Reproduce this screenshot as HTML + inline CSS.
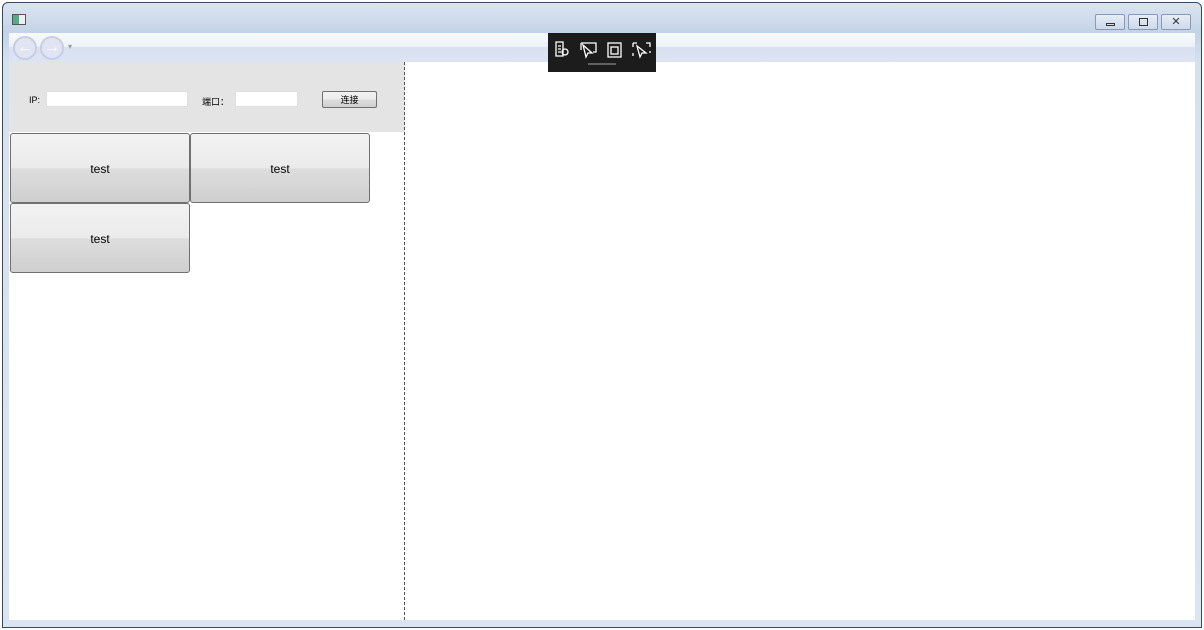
<!DOCTYPE html>
<html><head><meta charset="utf-8"><style>
*{margin:0;padding:0;box-sizing:border-box}
body{width:1204px;height:630px;position:relative;overflow:hidden;background:#fff;font-family:"Liberation Sans","Noto Sans CJK SC",sans-serif}
.a{position:absolute}
.btn{position:absolute;border:1px solid #707070;border-radius:3px;background:linear-gradient(#f2f2f2 0,#ebebeb 50%,#dddddd 51%,#cfcfcf 100%);font-size:12px;display:flex;align-items:center;justify-content:center;color:#000;padding-top:2px}
.wb{position:absolute;top:14px;width:30px;height:16px;border:1px solid #8a9ab5;border-radius:2px;background:linear-gradient(#e6edf6,#cdd9ea)}
</style></head><body>
<div class="a" style="left:2px;top:2px;width:1200px;height:626px;border:1px solid #3a4a5e;border-radius:6px 6px 0 0;background:linear-gradient(#dbe5f1,#c3d3e6 30px,#d6e1ee 60px,#dbe5f1)"></div>
<div class="a" style="left:12px;top:14px;width:14px;height:11px;border:1px solid #555;background:linear-gradient(90deg,#5a8 0 50%,#eee 50%)"></div>
<div class="wb" style="left:1095px"><div class="a" style="left:10px;top:8px;width:9px;height:3px;border:1px solid #333"></div></div>
<div class="wb" style="left:1128px"><div class="a" style="left:10px;top:3px;width:9px;height:8px;border:1px solid #333"></div></div>
<div class="wb" style="left:1161px;font-size:11px;text-align:center;line-height:14px;color:#333">✕</div>
<div class="a" style="left:9px;top:33px;width:1186px;height:29px;background:linear-gradient(#f8fafd 0,#eef2f9 45%,#d9e2f1 50%,#dce4f3 100%)"></div>
<div class="a" style="left:13px;top:36px;width:24px;height:24px;border-radius:50%;border:2px solid #c9cde2;background:#e1e5f3;color:#fff;font-size:16px;text-align:center;line-height:20px">←</div>
<div class="a" style="left:40px;top:36px;width:24px;height:24px;border-radius:50%;border:2px solid #c9cde2;background:#e1e5f3;color:#fff;font-size:16px;text-align:center;line-height:20px">→</div>
<div class="a" style="left:68px;top:42px;font-size:8px;color:#999">▾</div>
<div class="a" style="left:9px;top:62px;width:1186px;height:558px;background:#fff"></div>
<div class="a" style="left:9px;top:62px;width:396px;height:70px;background:#e4e4e4"></div>
<div class="a" style="left:29px;top:95px;font-size:9px">IP:</div>
<div class="a" style="left:46px;top:91px;width:142px;height:16px;background:#fff;border:1px solid #e0e0e0"></div>
<div class="a" style="left:202px;top:95px;font-size:9px">端口：</div>
<div class="a" style="left:235px;top:91px;width:63px;height:16px;background:#fff;border:1px solid #e0e0e0"></div>
<div class="btn" style="left:322px;top:91px;width:55px;height:17px;font-size:9px;border-radius:2px;padding-top:0">连接</div>
<div class="a" style="left:404px;top:62px;width:0;height:558px;border-left:1px dashed #555"></div>
<div class="btn" style="left:10px;top:133px;width:180px;height:70px">test</div>
<div class="btn" style="left:190px;top:133px;width:180px;height:70px">test</div>
<div class="btn" style="left:10px;top:203px;width:180px;height:70px">test</div>
<div class="a" style="left:548px;top:33px;width:108px;height:39px;background:#1c1c1c"></div>
<svg class="a" style="left:548px;top:33px" width="108" height="39" fill="none" stroke="#fff" stroke-width="1.3">
<path d="M8 9h7v14H8zM10 13h3M10 16h3M10 19h3"/><circle cx="17" cy="19" r="3"/>
<path d="M33 10h15v9h-3M33 10v7M35 12l3 12 2-4 4 0z"/>
<rect x="60" y="10" width="13" height="14"/><rect x="63" y="14" width="7" height="7"/>
<path d="M85 10h4M98 10h4v4M85 10v4M85 20v3M102 18v2M89 13l3 11 2-4 4 0z"/>
<path d="M40 31h28" stroke="#888"/>
</svg>
</body></html>
